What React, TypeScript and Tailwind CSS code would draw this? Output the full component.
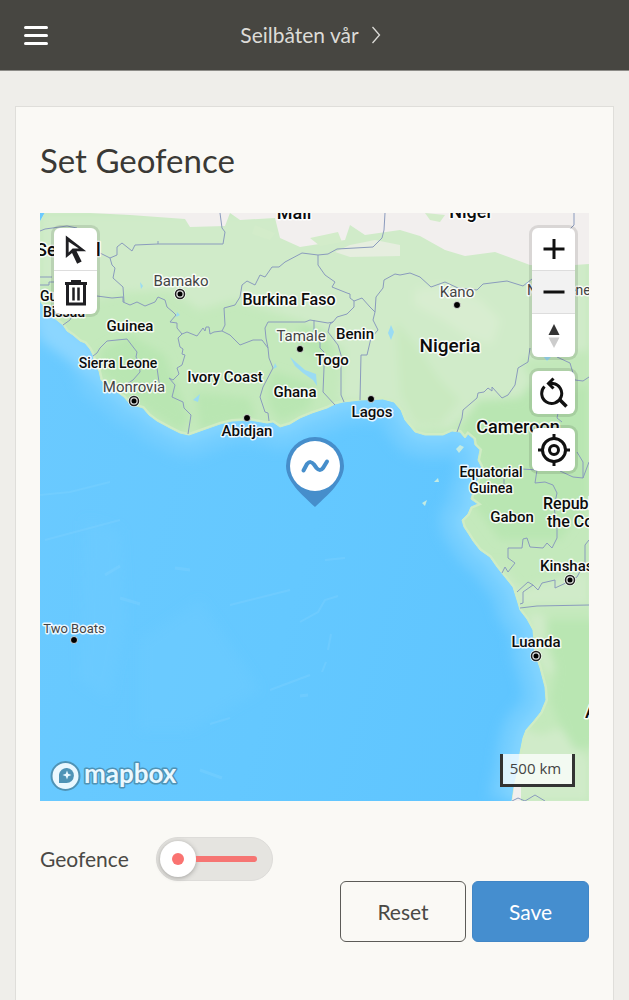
import React, { useState } from 'react';

type Label = { text: string; x: number; y: number; size: number; city?: boolean; start?: boolean };

const labels: Label[] = [
  { text: 'Mali', x: 294, y: 219, size: 18 },
  { text: 'Niger', x: 471, y: 218, size: 18 },
  { text: 'Senegal', x: 36, y: 256, size: 18, start: true },
  { text: 'Guinea-', x: 40, y: 301, size: 14, start: true },
  { text: 'Bissau', x: 64, y: 317, size: 14 },
  { text: 'Guinea', x: 130, y: 331, size: 15 },
  { text: 'Sierra Leone', x: 118, y: 368, size: 14 },
  { text: 'Ivory Coast', x: 225, y: 382, size: 15 },
  { text: 'Burkina Faso', x: 289, y: 305, size: 16 },
  { text: 'Benin', x: 355, y: 339, size: 15 },
  { text: 'Togo', x: 332, y: 365, size: 15 },
  { text: 'Ghana', x: 295, y: 397, size: 15 },
  { text: 'Abidjan', x: 247, y: 436, size: 15 },
  { text: 'Lagos', x: 372, y: 417, size: 15 },
  { text: 'Nigeria', x: 450, y: 352, size: 19 },
  { text: 'Cameroon', x: 518, y: 433, size: 18 },
  { text: 'Equatorial', x: 491, y: 477, size: 14 },
  { text: 'Guinea', x: 491, y: 493, size: 14 },
  { text: 'Gabon', x: 512, y: 522, size: 15 },
  { text: 'Republic of', x: 543, y: 509, size: 16, start: true },
  { text: 'the Congo', x: 547, y: 527, size: 16, start: true },
  { text: 'Kinshasa', x: 540, y: 571, size: 15, start: true },
  { text: 'Luanda', x: 536, y: 647, size: 15 },
  { text: 'Angola', x: 585, y: 718, size: 18, start: true },
  { text: 'Bamako', x: 181, y: 286, size: 15, city: true },
  { text: 'Monrovia', x: 134, y: 392, size: 15, city: true },
  { text: 'Tamale', x: 301, y: 341, size: 15, city: true },
  { text: 'Kano', x: 457, y: 297, size: 15, city: true },
  { text: 'Ndjamene', x: 527, y: 295, size: 14, city: true, start: true },
  { text: 'Two Boats', x: 74, y: 633, size: 13, city: true },
];

const capitals = [[180, 294], [134, 401], [570, 580], [536, 656]];
const towns = [[300, 349], [247, 418], [371, 399], [457, 305], [74, 640]];

const coast =
  'M40 301 L46 309 L53 317 L63 325 L67 331 L73 335 L80 341 L85 343 L90 349 L93 355 L95 365 L99 371 L101 380 L107 385 L117 392 L124 397 L130 404 L143 408 L149 415 L157 421 L170 428 L180 433 L189 435 L203 430 L220 424 L232 421 L250 420 L267 423 L273 422 L280 427 L290 424 L300 418 L312 413 L327 408 L335 404 L343 402 L360 400 L383 399 L394 402 L401 410 L405 420 L415 432 L425 435 L443 435 L452 431 L460 432 L465 438 L468 434 L474 439 L475 445 L480 450 L478 460 L483 470 L477 482 L473 492 L471 499 L478 504 L471 507 L468 514 L462 520 L464 527 L468 533 L473 541 L480 550 L490 557 L497 567 L505 577 L513 587 L518 603 L520 610 L527 619 L533 630 L535 653 L540 668 L545 687 L546 700 L541 712 L533 722 L526 730 L523 738 L520 753 L518 770 L514 787 L512 801';

const borders = [
  'M40 231 L45 229 L67 226 L77 228 L98 252 L110 258',
  'M220 213 L222 228 L225 232 L223 244 L158 244 V241 M158 244 L135 245 L132 251 L122 243 L117 247 L117 255 L110 258 L112 265 L115 268 L113 278 L123 287 L124 302',
  'M40 277 H52 M40 285 H49 V282 H60 M63 325 L70 320 L74 312 M97 296 L112 298 L123 297 L123 302 L130 305 L137 302 L145 306 L155 302 L158 297 L165 300 L167 307 L173 312 L176 315 L170 322 L177 323 L177 328 L182 334',
  'M182 334 L178 338 L180 347 L183 349 L182 354 L185 355 L182 365 L177 368 L179 374 L173 380 L169 378 L175 385 L172 397 L183 402 L184 408 L191 415 L188 434',
  'M93 356 L97 353 L100 348 L107 341 L127 339 L137 352 L136 357 L139 362 L140 372 L133 380 L127 384 M157 368 L159 382 L163 388',
  'M182 334 L187 332 L197 336 L203 328 L205 331 L206 327 L209 327 L210 334 L214 332 L222 331 L225 325 L224 308 L235 305 L240 297 L242 285 L247 281 L255 285 L260 275 L265 277 L272 267 L279 267 L285 262 L302 253 L318 255 L328 254 L337 249 L373 247 L382 238 L384 230 L385 213',
  'M318 255 L318 265 L325 275 L335 282 L332 287 L347 293 L350 294 L350 298 L354 301 L354 307 L347 314 L337 317 L333 322 L330 324 L328 332 L338 345 L341 355 L341 395 L344 402',
  'M354 301 L362 298 L370 307 L375 312 L376 297 L383 288 L384 280 L395 274 L400 275 L410 273 L420 277 L431 287 L445 282 L458 288 L477 290 L483 284 L507 281 L523 286 L532 279',
  'M375 312 L373 320 L378 330 L371 338 L367 355 L361 355 L360 400',
  'M222 331 L230 335 L240 345 L253 340 L262 340 L268 348 L266 338 L265 328 L268 322 L305 322 L310 320 L328 323 L333 322',
  'M268 348 L269 358 L273 368 L263 387 L260 397 L265 412 L268 413 L269 421 M314 320 L314 330 L320 338 L320 348 L324 352 L324 368 L323 392 L335 405',
  'M457 432 L462 418 L463 410 L477 398 L478 393 L484 392 L488 388 L492 391 L492 387 L502 398 L508 395 L515 385 L518 368 L528 362 L530 348',
  'M557 357 L570 363 L575 380 L583 381 L589 377 M558 413 L557 418 L562 422 M574 213 V225 L570 229',
  'M522 469 L537 470 L535 483 L545 482 L553 485 L557 493 L554 507 L557 527 L557 538 L552 548 L547 543 L543 548 L530 547 L527 538 L523 539 L522 548 L508 548 V558 L515 563 L508 572 L505 567 L502 573 M504 478 V485',
  'M560 471 L573 477 L583 478 L583 462 L577 452 M583 478 L589 462',
  'M589 540 L585 545 L585 562 L577 577 L568 582 L555 588 V580 L542 583 L538 590 L533 585 L523 592 V603 L520 604 M517 592 L528 582 L533 585',
  'M520 608 L537 606 L589 605 M512 801 L518 798 L525 801 L535 795 L545 801',
];

// lighter and darker vegetation, desert in the north
const pale = [
  'M40 213 H589 V420 L560 400 L530 395 L480 402 L450 428 L410 430 L395 405 L340 400 L345 350 L300 320 L235 300 L200 310 L170 290 L125 292 L90 300 L60 280 L40 285 Z',
  'M516 725 L540 735 L560 728 L575 745 L589 760 V801 H512 Z',
  'M528 612 L545 615 L550 625 L542 640 L555 668 L548 675 L535 650 Z',
  'M495 560 L520 590 L589 570 V605 H520 L505 580 Z',
];
const lush = [
  'M100 350 L130 335 L165 355 L178 390 L190 418 L180 432 L150 412 L120 388 L100 372 Z',
  'M460 432 L478 400 L520 398 L540 370 L589 375 V500 L560 540 L500 540 L470 500 L482 470 Z',
  'M195 392 L250 398 L255 418 L200 430 Z',
  'M270 370 L315 385 L310 408 L280 422 L268 405 Z',
  'M300 322 L325 330 L335 350 L322 360 L302 348 Z',
];

const btn = 'flex h-[43px] w-[43px] items-center justify-center';
const group = 'flex flex-col divide-y divide-[#dddddd] overflow-hidden rounded-md bg-white shadow-[0_0_0_3px_rgba(0,0,0,0.1)]';

function MapCanvas() {
  return (
    <svg className="block h-full w-full" viewBox="40 213 549 588" preserveAspectRatio="xMidYMid slice" role="img" aria-label="Map of the Gulf of Guinea">
      <defs>
        <linearGradient id="sea" x1="0" y1="0" x2="1" y2="0.3">
          <stop offset="0" stopColor="#6bcaff" />
          <stop offset="0.6" stopColor="#64c8ff" />
          <stop offset="1" stopColor="#5fc5ff" />
        </linearGradient>
        <filter id="soft" x="-20%" y="-20%" width="140%" height="140%">
          <feGaussianBlur stdDeviation="6" />
        </filter>
        <filter id="edge">
          <feGaussianBlur stdDeviation="4" />
        </filter>
        <clipPath id="land">
          <path d={`${coast} H589 V213 H45 L40 222 Z`} />
        </clipPath>
      </defs>
      <rect x="40" y="213" width="549" height="588" fill="url(#sea)" />
      <g filter="url(#soft)">
        <path d={coast} fill="none" stroke="#73cdff" strokeWidth="46" strokeLinejoin="round" />
        <path d={coast} fill="none" stroke="#84d5ff" strokeWidth="14" strokeLinejoin="round" />
        <path d="M30 290 L95 350 L95 380 L40 340 Z" fill="#8bd6ff" />
        <path d="M85 520 L120 530 L125 620 L110 700 L80 680 Z M140 640 L200 600 L260 690 L190 730 L140 730 Z" fill="#72cdff" opacity="0.3" />
      </g>
      {/* sea floor ridges */}
      <g fill="none" stroke="#82d3ff" opacity="0.35">
        <path d="M40 495 L70 492 L110 482 M45 540 L90 528 L120 520 M300 622 L318 612 L325 600 L338 596 M328 650 L331 634 M322 672 L326 662 M210 724 L230 718 M325 560 L345 558 M270 690 L310 675 M230 605 L290 590" strokeWidth="2" />
        <path d="M105 575 L120 566 M120 598 L140 604 M175 568 L190 570 M200 770 L222 778 M300 696 L308 695" strokeWidth="3" />
      </g>
      <path d={`${coast} H589 V213 H45 L40 222 Z`} fill="#c4e9bc" stroke="#cdecc8" strokeWidth="1" />
      <g clipPath="url(#land)">
        <g filter="url(#edge)">
          {pale.map((d) => <path key={d} d={d} fill="#d0ebc9" />)}
          {lush.map((d) => <path key={d} d={d} fill="#b9e6b2" />)}
          <path d="M545 620 H600 V745 L575 750 L560 725 L550 700 L556 670 Z" fill="#b9e6b2" />
          <path d="M415 290 L445 285 L480 300 L500 320 L492 345 L465 335 L440 318 L415 305 Z" fill="#d8edd0" />
          <path d="M395 320 L420 350 L440 380 L460 400 L440 425 L415 425 L400 395 Z" fill="#c9e9c0" />
          <path d="M520 360 L589 350 V385 L540 395 Z" fill="#c2e8ba" />
        </g>
        <path d={coast} fill="none" stroke="#d0ecc4" strokeWidth="4" />
        <path d="M90 213 L130 215 L185 219 L190 227 L225 226 L230 213 Z M230 213 L240 220 L275 218 L280 238 L300 247 L345 240 L350 225 L365 235 L400 230 L420 236 L445 250 L465 256 L495 252 L530 265 L560 266 L589 264 V213 Z" fill="#f2efee" />
        <path d="M335 252 L350 245 L375 240 L400 245 V256 L350 257 Z" fill="#e6eedf" />
        <path d="M255 225 L275 233 L270 240 L252 234 Z M425 213 L445 215 L440 222 L430 220 Z M310 238 L338 232 L342 242 L320 246 Z" fill="#d3ecca" />
        <path d="M512 786 L521 786 V801 H511 Z" fill="#f2efee" />
        {/* lakes and rivers */}
        <path d="M290 357 L298 364 L305 370 L316 374 L317 386 L313 380 L303 373 L295 366 Z M391 325 L394 332 L391 340 L388 333 Z M275 363 L277 367 L273 369 Z M140 282 L143 286 L141 289 Z M177 312 L180 315 L176 317 Z M193 400 L200 394 L198 402 Z M543 356 L551 357 L547 361 Z" fill="#9adbf3" />
      </g>
      <path d="M456 449 L460 445 L464 447 L459 453 Z M434 482 L438 478 L439 482 Z M422 503 L427 500 L425 506 Z" fill="#c3ebe2" />
      <g fill="none" stroke="#8a9bbd" strokeWidth="1" strokeLinejoin="round">
        {borders.map((d) => <path key={d} d={d} />)}
      </g>
      <g stroke="#ffffff" strokeWidth="3" paintOrder="stroke" strokeLinejoin="round" strokeOpacity="0.85">
        {labels.map((l) => (
          <text
            key={`${l.text}-${l.y}`}
            x={l.x}
            y={l.y}
            fontSize={l.size}
            textAnchor={l.start ? 'start' : 'middle'}
            fill={l.city ? '#444444' : '#0c0c0c'}
            className={l.city ? "font-['Roboto',sans-serif] font-normal" : "font-['Roboto',sans-serif] font-medium"}
          >
            {l.text}
          </text>
        ))}
      </g>
      {capitals.map(([x, y]) => (
        <g key={`${x}-${y}`}>
          <circle cx={x} cy={y} r="6" fill="#ffffff" opacity="0.8" />
          <circle cx={x} cy={y} r="4.500" fill="#dddddd" stroke="#222222" strokeWidth="1.500" />
          <circle cx={x} cy={y} r="2.500" fill="#000000" />
        </g>
      ))}
      {towns.map(([x, y]) => (
        <circle key={`${x}-${y}`} cx={x} cy={y} r="3.500" fill="#000000" stroke="#ffffff" strokeOpacity="0.7" strokeWidth="1" />
      ))}
    </svg>
  );
}

function GeofenceMap() {
  return (
    <div className="relative h-[588px] overflow-hidden">
      <MapCanvas />

      {/* boat marker */}
      <svg className="absolute top-1/2 left-1/2 -translate-x-1/2 -translate-y-full" width="60" height="72" viewBox="0 0 60 72" aria-label="Boat position">
        <path d="M30 72 C22 64 1 48 1 31 A29 29 0 0 1 59 31 C59 48 38 64 30 72 Z" fill="#468ecb" />
        <circle cx="30" cy="31" r="25" fill="#ffffff" />
        <path d="M18.500 35.500 L22 29 Q25.500 25 29 29.500 L31.500 33 Q35 37 38 33 L42 26.500" fill="none" stroke="#468ecb" strokeWidth="4" strokeLinecap="round" />
      </svg>

      {/* drawing tools */}
      <div className={`absolute top-[15px] left-3.5 ${group}`}>
        <button type="button" aria-label="Select" className={btn}>
          <svg width="28" height="34" viewBox="0 0 24 30">
            <path d="M3 3 V23 L8.500 18.500 L13 28 L17 26 L12.500 17 H21 Z" fill="#1f1f23" />
            <path d="M5.500 8.500 V18 L9 14.500 H14.500 Z" fill="#ffffff" />
          </svg>
        </button>
        <button type="button" aria-label="Delete" className={btn}>
          <svg width="26" height="28" viewBox="0 0 26 28" fill="none" stroke="#1f1f23" strokeWidth="3">
            <path d="M2 4.500 H24 M8 2.500 H18 M4.500 4.500 V25 H21.500 V4.500" />
            <path d="M10.500 8.500 V21.500 M15.500 8.500 V21.500" strokeWidth="2.500" />
          </svg>
        </button>
      </div>

      {/* navigation */}
      <div className="absolute top-[15px] right-3.5 flex flex-col gap-3.5">
        <div className={group}>
          <button type="button" aria-label="Zoom in" className={btn}>
            <svg width="22" height="22" viewBox="0 0 22 22" stroke="#111111" strokeWidth="3"><path d="M11 1 V21 M0.500 11 H21.500" /></svg>
          </button>
          <button type="button" aria-label="Zoom out" className={`${btn} bg-[#f2f2f2]`}>
            <svg width="22" height="22" viewBox="0 0 22 22" stroke="#111111" strokeWidth="3"><path d="M0.500 11 H21.500" /></svg>
          </button>
          <button type="button" aria-label="Reset bearing to north" className={btn}>
            <svg width="12" height="26" viewBox="0 0 12 26">
              <path d="M6 1 L11.500 12 H0.500 Z" fill="#333333" />
              <path d="M6 25 L11.500 14.500 H0.500 Z" fill="#cccccc" />
            </svg>
          </button>
        </div>
        <div className={group}>
          <button type="button" aria-label="Reset zoom" className={btn}>
            <svg width="28" height="32" viewBox="0 0 28 32" fill="none" stroke="#111111" strokeWidth="3">
              <path d="M4.500 9.500 A10 10 0 1 0 13 6.500 H9" />
              <path d="M13.500 1.500 L8.500 6.500 L13.500 11.500" />
              <path d="M19 22 L26.500 29.500" strokeWidth="3.500" />
            </svg>
          </button>
        </div>
        <div className={group}>
          <button type="button" aria-label="Find my location" className={btn}>
            <svg width="32" height="32" viewBox="0 0 32 32" fill="none" stroke="#111111" strokeWidth="3">
              <circle cx="16" cy="16" r="11.500" />
              <circle cx="16" cy="16" r="4.500" />
              <path d="M16 0 V5 M16 27 V32 M0 16 H5 M27 16 H32" />
            </svg>
          </button>
        </div>
      </div>

      {/* attribution */}
      <a href="#mapbox" aria-label="Mapbox" className="absolute bottom-2 left-2.5">
        <svg width="130" height="34" viewBox="0 0 130 34">
          <circle cx="15.500" cy="17" r="14" fill="#eaf8ff" stroke="#4f93b6" strokeWidth="2" />
          <path d="M9 24 V15.500 A7.500 7.500 0 1 1 16.500 24 Z" fill="#4f93b6" />
          <path d="M17 11.500 L18.200 14.800 L21.500 16 L18.200 17.200 L17 20.500 L15.800 17.200 L12.500 16 L15.800 14.800 Z" fill="#eaf8ff" />
          <text x="34" y="24" fontSize="26" fill="#eaf8ff" stroke="#4f93b6" strokeWidth="3" strokeLinejoin="round" paintOrder="stroke" className="font-['Lato',sans-serif] font-bold">mapbox</text>
        </svg>
      </a>
      <div className="absolute right-3.5 bottom-3.5 w-[75px] border-[3px] border-t-0 border-[#333333] bg-white/75 pt-0.5 pr-1 pb-1 text-center font-['Open_Sans',sans-serif] text-[15px] leading-6 text-[#444444]">
        500 km
      </div>
    </div>
  );
}

function Toggle() {
  const [on, setOn] = useState(false);
  return (
    <div className="flex items-center gap-[27px]">
      <label htmlFor="geofence" className="text-[21px]">Geofence</label>
      <div className="grid h-11 w-[117px] items-center">
        <input
          id="geofence"
          type="checkbox"
          role="switch"
          checked={on}
          onChange={(e) => setOn(e.target.checked)}
          className="col-start-1 row-start-1 h-11 w-full cursor-pointer appearance-none rounded-full border border-[#dddcd9] bg-[#e5e4e0]"
        />
        <div className={`pointer-events-none col-start-1 row-start-1 flex items-center pr-4 pl-1 ${on ? 'flex-row-reverse' : ''}`}>
          <span className="flex size-9 items-center justify-center rounded-full bg-white shadow-[0_1px_5px_rgba(0,0,0,0.3)]">
            <span className="size-3 rounded-full bg-[#fa7371]" />
          </span>
          <span className="h-1.5 flex-1 rounded-r-full bg-[#f67573]" />
        </div>
      </div>
    </div>
  );
}

export default function App() {
  return (
    <div className="flex min-h-screen flex-col bg-[#efeeea] font-['Lato',sans-serif] text-[#4a4945]">
      {/* header */}
      <header className="grid h-[71px] grid-cols-[1fr_auto_1fr] items-center border-b border-[#8d8c88] bg-[#474641] pr-5 pl-3">
        <button type="button" aria-label="Menu" className="flex w-12 flex-col gap-[5px] p-3">
          <span className="h-[3px] w-full rounded-sm bg-white" />
          <span className="h-[3px] w-full rounded-sm bg-white" />
          <span className="h-[3px] w-full rounded-sm bg-white" />
        </button>
        <a href="#boat" className="flex items-center gap-3 text-[21px] text-[#dddcd8]">
          Seilbåten vår
          <svg width="10" height="18" viewBox="0 0 10 18" fill="none" stroke="currentColor" strokeWidth="1.300"><path d="M1.500 1 L8.500 9 L1.500 17" /></svg>
        </a>
      </header>

      <main className="mx-[15px] mt-[35px] flex-1 border border-b-0 border-[#dfdeda] bg-[#faf9f5] px-6 pt-8">
        <h1 className="mb-8 text-[33px] leading-[42px] text-[#3a3935]">Set Geofence</h1>
        <GeofenceMap />
        <form className="mt-9" onSubmit={(e) => e.preventDefault()}>
          <Toggle />
          <div className="flex justify-end gap-1.5 text-[21px]">
            <button type="reset" className="h-[61px] w-[126px] rounded-md border border-[#5c5b57]">Reset</button>
            <button type="submit" className="h-[61px] w-[117px] rounded-md border border-[#4186c6] bg-[#458ecf] text-white">Save</button>
          </div>
        </form>
      </main>
    </div>
  );
}
